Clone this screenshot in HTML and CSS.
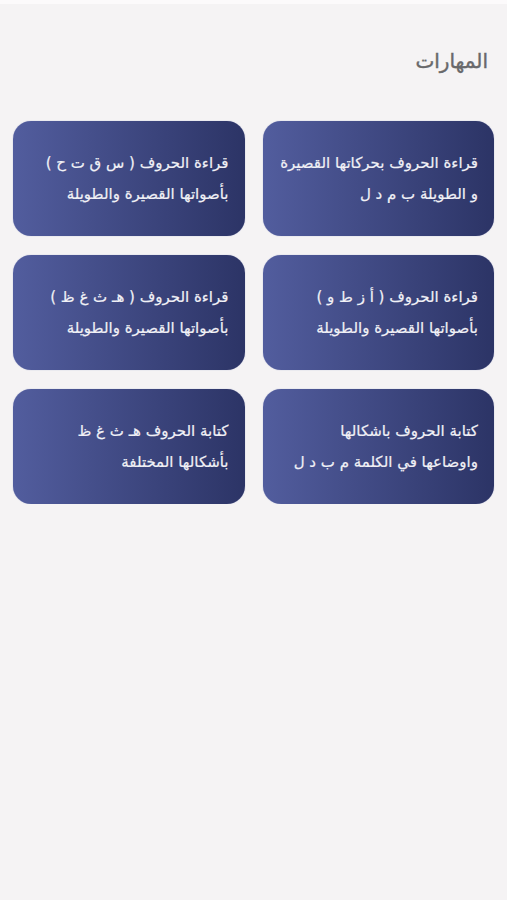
FILE: index.html
```html
<!DOCTYPE html>
<html lang="ar" dir="rtl">
<head>
    <meta charset="UTF-8">
    <meta name="viewport" content="width=device-width, initial-scale=1.0">
    <title>المهارات</title>
    <link rel="stylesheet" href="styles.css">
</head>
<body>
    <div class="topbar"></div>
    <div class="page">
        <h2 class="title">المهارات</h2>

        <div class="skills">
            <div class="skill-card">
                <p>قراءة الحروف بحركاتها القصيرة<br>و الطويلة ب م د ل</p>
            </div>
            <div class="skill-card">
                <p>قراءة الحروف ( س ق ت ح )<br>بأصواتها القصيرة والطويلة</p>
            </div>
            <div class="skill-card">
                <p>قراءة الحروف ( أ ز ط و )<br>بأصواتها القصيرة والطويلة</p>
            </div>
            <div class="skill-card">
                <p>قراءة الحروف ( هـ ث غ ظ )<br>بأصواتها القصيرة والطويلة</p>
            </div>
            <div class="skill-card">
                <p>كتابة الحروف باشكالها<br>واوضاعها في الكلمة م ب د ل</p>
            </div>
            <div class="skill-card">
                <p>كتابة الحروف هـ ث غ ظ<br>بأشكالها المختلفة</p>
            </div>
        </div>
    </div>
</body>
</html>
```

FILE: styles.css
```css
body {
    margin: 0;
    background-color: #f5f3f4;
    font-family: "DejaVu Sans", "Noto Sans", sans-serif;
}
.topbar {
    height: 4px;
    background-color: #fcfafb;
}
.page {
    padding: 0 13px;
}
.title {
    margin: 0;
    padding: 42px 6px 0 0;
    height: 39px;
    font-size: 20px;
    font-weight: normal;
    color: #68686a;
    line-height: 30px;
    -webkit-text-stroke: 0.4px #68686a;
}
.skills {
    margin-top: 36px;
    display: grid;
    grid-template-columns: 1fr 1fr;
    column-gap: 18px;
    row-gap: 19px;
}
.skill-card {
    height: 115px;
    border-radius: 18px;
    background: linear-gradient(to right, #525d9e, #2c3466);
    box-shadow: 0 0 1px rgba(120, 130, 190, 0.8);
    display: flex;
    align-items: center;
    padding: 0 16px;
}
.skill-card p {
    margin: 0;
    color: #f1f1f6;
    font-size: 15px;
    line-height: 31px;
    -webkit-text-stroke: 0.2px #f1f1f6;
}
```
